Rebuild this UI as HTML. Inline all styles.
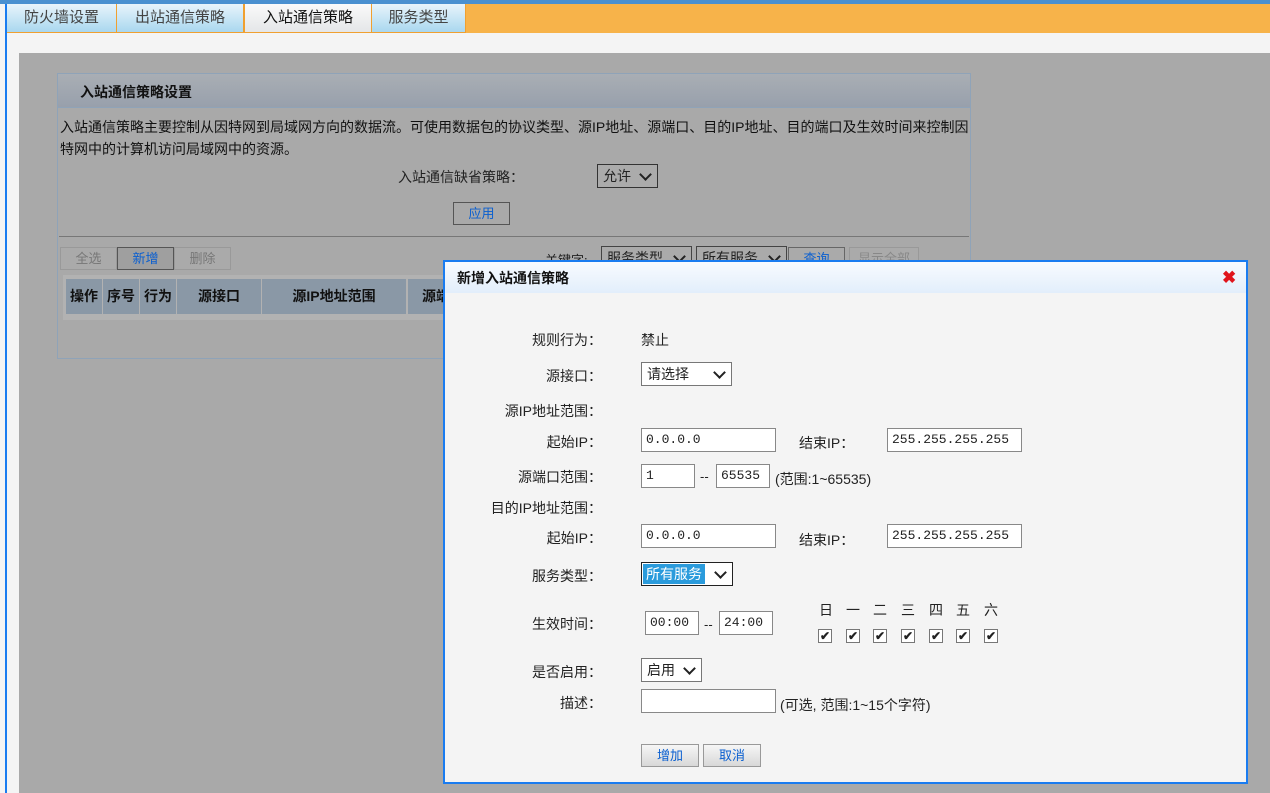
<!DOCTYPE html>
<html><head><meta charset="utf-8"><style>
*{margin:0;padding:0;box-sizing:border-box}
body{width:1270px;height:793px;overflow:hidden;background:#f4f4f4;font:13px "Liberation Sans","Noto Sans CJK SC",sans-serif;color:#222;position:relative}
.a{position:absolute;white-space:nowrap}
.tab{position:absolute;top:4px;height:29px;line-height:27px;text-align:center;font-size:15px;color:#444;background:linear-gradient(#e8f4fb,#a9d7ef);border-right:1px solid #f0a030;border-bottom:1px solid #f0a030}
.inp{position:absolute;background:#fff;border:1px solid #888;height:24px;line-height:22px;padding-left:4px;font-family:"Liberation Mono","Noto Sans CJK SC",monospace;font-size:13px}
.sel{position:absolute;background:#fff;border:1px solid #777;height:24px;line-height:22px;padding-left:5px;font-size:14px}
.sel:after{content:"";position:absolute;right:7px;top:5px;width:7px;height:7px;border-right:2.5px solid #222;border-bottom:2.5px solid #222;transform:rotate(45deg)}
.btn{position:absolute;height:23px;line-height:21px;text-align:center;border:1px solid #999;background:linear-gradient(#f6f6f6,#d8d8d8);color:#0a5fd0;font-size:13px}
.lbl{position:absolute;font-size:14px;text-align:right;white-space:nowrap}
.cb{position:absolute;top:629px;width:14px;height:14px;border:1px solid #777;background:#fff;font-size:12px;line-height:12px;text-align:center;font-weight:bold}
.th{position:absolute;top:279px;height:35px;line-height:35px;text-align:center;background:#8a98a6;font-weight:bold;font-size:14px;color:#111;white-space:nowrap;overflow:hidden}
</style></head><body>
<div class="a" style="left:0;top:0;width:1270px;height:4px;background:#4a90d0"></div>
<div class="a" style="left:5px;top:4px;width:2px;height:789px;background:#1a7cf0"></div>
<div class="a" style="left:466px;top:4px;width:804px;height:29px;background:#f7b34a"></div>
<div class="tab" style="left:7px;width:110px">防火墙设置</div>
<div class="tab" style="left:117px;width:127px">出站通信策略</div>
<div class="tab" style="left:244px;width:128px;background:linear-gradient(#fafafa,#e4e6e8);color:#111;border-left:1px solid #f0a030">入站通信策略</div>
<div class="tab" style="left:372px;width:94px">服务类型</div>

<div class="a" style="left:19px;top:53px;width:1251px;height:740px;background:#a9a9a9"></div>
<div class="a" style="left:57px;top:73px;width:914px;height:286px;border:1px solid #8fa3b8"></div>
<div class="a" style="left:58px;top:74px;width:912px;height:34px;background:linear-gradient(#a9aeb4,#98a0ac);border-bottom:1px solid #8fa3b8"></div>
<div class="a" style="left:80px;top:82px;font-size:14px;font-weight:bold;color:#111">入站通信策略设置</div>
<div class="a" style="left:60px;top:116px;font-size:14px;color:#111;line-height:22px;white-space:normal;width:910px">入站通信策略主要控制从因特网到局域网方向的数据流。可使用数据包的协议类型、源IP地址、源端口、目的IP地址、目的端口及生效时间来控制因特网中的计算机访问局域网中的资源。</div>
<div class="a" style="left:398px;top:167px;font-size:14px">入站通信缺省策略：</div>
<div class="sel" style="left:597px;top:164px;width:61px;background:#ababab;border-color:#333">允许</div>
<div class="btn" style="left:453px;top:202px;width:57px;background:#a9a9a9;border-color:#555">应用</div>
<div class="a" style="left:59px;top:236px;width:910px;height:1px;background:#777"></div>
<div class="btn" style="left:60px;top:247px;width:57px;background:#aaa;color:#777;border-color:#999">全选</div>
<div class="btn" style="left:117px;top:247px;width:57px;background:#9f9f9f;border-color:#555">新增</div>
<div class="btn" style="left:174px;top:247px;width:57px;background:#aaa;color:#777;border-color:#999">删除</div>
<div class="a" style="left:545px;top:250px;font-size:13px">关键字:</div>
<div class="sel" style="left:601px;top:246px;width:91px;background:#aaa;border-color:#444">服务类型</div>
<div class="sel" style="left:696px;top:246px;width:91px;background:#aaa;border-color:#444">所有服务</div>
<div class="btn" style="left:788px;top:247px;width:57px;background:#aaa;border-color:#666">查询</div>
<div class="btn" style="left:849px;top:247px;width:70px;background:#aaa;color:#888">显示全部</div>
<div class="a" style="left:63px;top:275px;width:380px;height:45px;background:#b2b2b2"></div>
<div class="th" style="left:66px;width:36px">操作</div>
<div class="th" style="left:103px;width:36px">序号</div>
<div class="th" style="left:140px;width:36px">行为</div>
<div class="th" style="left:177px;width:84px">源接口</div>
<div class="th" style="left:262px;width:144px">源IP地址范围</div>
<div class="th" style="left:408px;width:36px;text-align:left;padding-left:14px">源端</div>

<div class="a" style="left:443px;top:260px;width:805px;height:524px;border:2px solid #1a7cf0;background:#f4f4f4"></div>
<div class="a" style="left:445px;top:262px;width:801px;height:31px;background:linear-gradient(#f8fbff,#e2eefb)"></div>
<div class="a" style="left:457px;top:268px;font-size:14px;font-weight:bold;color:#111">新增入站通信策略</div>
<div class="a" style="left:1222px;top:268px;color:#e0141c;font-size:17px;font-weight:bold">✖</div>

<div class="lbl" style="right:668px;top:330px">规则行为：</div>
<div class="a" style="left:641px;top:330px;font-size:14px">禁止</div>
<div class="lbl" style="right:668px;top:366px">源接口：</div>
<div class="sel" style="left:641px;top:362px;width:91px">请选择</div>
<div class="lbl" style="right:668px;top:401px">源IP地址范围：</div>
<div class="lbl" style="right:668px;top:432px">起始IP：</div>
<div class="inp" style="left:641px;top:428px;width:135px">0.0.0.0</div>
<div class="a" style="left:799px;top:433px;font-size:14px">结束IP：</div>
<div class="inp" style="left:887px;top:428px;width:135px">255.255.255.255</div>
<div class="lbl" style="right:668px;top:467px">源端口范围：</div>
<div class="inp" style="left:641px;top:464px;width:54px">1</div>
<div class="a" style="left:700px;top:469px">--</div>
<div class="inp" style="left:716px;top:464px;width:54px">65535</div>
<div class="a" style="left:775px;top:469px;font-size:14px">(范围:1~65535)</div>
<div class="lbl" style="right:668px;top:498px">目的IP地址范围：</div>
<div class="lbl" style="right:668px;top:528px">起始IP：</div>
<div class="inp" style="left:641px;top:524px;width:135px">0.0.0.0</div>
<div class="a" style="left:799px;top:530px;font-size:14px">结束IP：</div>
<div class="inp" style="left:887px;top:524px;width:135px">255.255.255.255</div>
<div class="lbl" style="right:668px;top:566px">服务类型：</div>
<div class="sel" style="left:641px;top:562px;width:92px;border-color:#222;padding-left:1px"><span style="background:#2a9bdc;color:#fff;padding:0 3px;display:inline-block;line-height:20px">所有服务</span></div>
<div class="lbl" style="right:668px;top:614px">生效时间：</div>
<div class="inp" style="left:645px;top:611px;width:54px">00:00</div>
<div class="a" style="left:704px;top:617px">--</div>
<div class="inp" style="left:719px;top:611px;width:54px">24:00</div>
<div class="a" style="left:819px;top:600px;font-size:14px">日</div>
<div class="a" style="left:846px;top:600px;font-size:14px">一</div>
<div class="a" style="left:873px;top:600px;font-size:14px">二</div>
<div class="a" style="left:901px;top:600px;font-size:14px">三</div>
<div class="a" style="left:929px;top:600px;font-size:14px">四</div>
<div class="a" style="left:956px;top:600px;font-size:14px">五</div>
<div class="a" style="left:984px;top:600px;font-size:14px">六</div>
<div class="cb" style="left:818px">✔</div>
<div class="cb" style="left:846px">✔</div>
<div class="cb" style="left:873px">✔</div>
<div class="cb" style="left:901px">✔</div>
<div class="cb" style="left:929px">✔</div>
<div class="cb" style="left:956px">✔</div>
<div class="cb" style="left:984px">✔</div>
<div class="lbl" style="right:668px;top:662px">是否启用：</div>
<div class="sel" style="left:641px;top:658px;width:61px">启用</div>
<div class="lbl" style="right:668px;top:693px">描述：</div>
<div class="inp" style="left:641px;top:689px;width:135px"></div>
<div class="a" style="left:780px;top:695px;font-size:14px">(可选, 范围:1~15个字符)</div>
<div class="btn" style="left:641px;top:744px;width:58px">增加</div>
<div class="btn" style="left:703px;top:744px;width:58px">取消</div>
</body></html>
